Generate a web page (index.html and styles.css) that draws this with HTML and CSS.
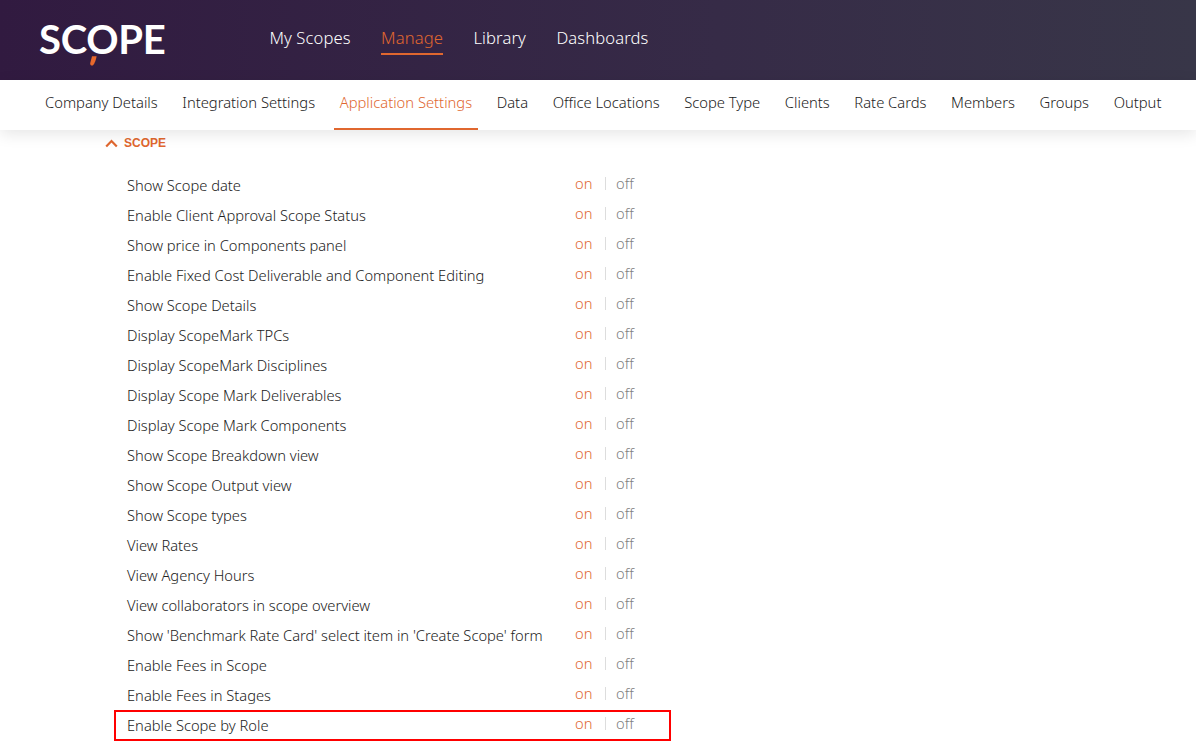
FILE: index.html
```html
<!DOCTYPE html>
<html lang="en">
<head>
    <meta charset="UTF-8">
    <title>Application Settings</title>
    <link rel="stylesheet" href="styles.css">
</head>
<body>
    <header class="top-bar">
        <a class="logo" href="#">
            <span class="logo-text">SCOPE</span>
            <svg class="logo-tail" width="10" height="12" viewBox="0 0 10 12"><path d="M7.6 1.2 3 1.2 1.2 8.2C.9 10 2.8 11.2 4.1 10.2 5.6 8.8 7 4.6 7.6 1.2Z" fill="#e8692c"/></svg>
        </a>
        <nav class="main-nav">
            <a href="#">My Scopes</a>
            <a href="#" class="active">Manage</a>
            <a href="#">Library</a>
            <a href="#">Dashboards</a>
        </nav>
    </header>
    <nav class="sub-nav">
        <a href="#">Company Details</a>
        <a href="#">Integration Settings</a>
        <a href="#" class="active">Application Settings</a>
        <a href="#">Data</a>
        <a href="#">Office Locations</a>
        <a href="#">Scope Type</a>
        <a href="#">Clients</a>
        <a href="#">Rate Cards</a>
        <a href="#">Members</a>
        <a href="#">Groups</a>
        <a href="#">Output</a>
    </nav>
    <main class="content">
        <div class="section-title">
            <svg width="14" height="10" viewBox="0 0 14 10"><path d="M1.2 8.4 6.5 3l5.3 5.4" fill="none" stroke="#e0672f" stroke-width="2.2"/></svg>
            <span>SCOPE</span>
        </div>
        <div class="settings">
            <div class="row"><span class="label">Show Scope date</span><span class="on">on</span><span class="off">off</span></div>
            <div class="row"><span class="label">Enable Client Approval Scope Status</span><span class="on">on</span><span class="off">off</span></div>
            <div class="row"><span class="label">Show price in Components panel</span><span class="on">on</span><span class="off">off</span></div>
            <div class="row"><span class="label">Enable Fixed Cost Deliverable and Component Editing</span><span class="on">on</span><span class="off">off</span></div>
            <div class="row"><span class="label">Show Scope Details</span><span class="on">on</span><span class="off">off</span></div>
            <div class="row"><span class="label">Display ScopeMark TPCs</span><span class="on">on</span><span class="off">off</span></div>
            <div class="row"><span class="label">Display ScopeMark Disciplines</span><span class="on">on</span><span class="off">off</span></div>
            <div class="row"><span class="label">Display Scope Mark Deliverables</span><span class="on">on</span><span class="off">off</span></div>
            <div class="row"><span class="label">Display Scope Mark Components</span><span class="on">on</span><span class="off">off</span></div>
            <div class="row"><span class="label">Show Scope Breakdown view</span><span class="on">on</span><span class="off">off</span></div>
            <div class="row"><span class="label">Show Scope Output view</span><span class="on">on</span><span class="off">off</span></div>
            <div class="row"><span class="label">Show Scope types</span><span class="on">on</span><span class="off">off</span></div>
            <div class="row"><span class="label">View Rates</span><span class="on">on</span><span class="off">off</span></div>
            <div class="row"><span class="label">View Agency Hours</span><span class="on">on</span><span class="off">off</span></div>
            <div class="row"><span class="label">View collaborators in scope overview</span><span class="on">on</span><span class="off">off</span></div>
            <div class="row"><span class="label">Show 'Benchmark Rate Card' select item in 'Create Scope' form</span><span class="on">on</span><span class="off">off</span></div>
            <div class="row"><span class="label">Enable Fees in Scope</span><span class="on">on</span><span class="off">off</span></div>
            <div class="row"><span class="label">Enable Fees in Stages</span><span class="on">on</span><span class="off">off</span></div>
            <div class="row highlight"><span class="label">Enable Scope by Role</span><span class="on">on</span><span class="off">off</span></div>
        </div>
    </main>
</body>
</html>
```

FILE: styles.css
```css
html, body {
    height: 751px;
    overflow: hidden;
}
body {
    margin: 0;
    background: #fff;
    font-family: "Noto Sans", "Liberation Sans", sans-serif;
    color: #222;
}
a {
    text-decoration: none;
    color: inherit;
}
.top-bar {
    height: 80px;
    display: flex;
    align-items: center;
    padding-left: 39px;
    background: linear-gradient(90deg, #311a40 0%, #362b47 60%, #383648 100%);
}
.logo {
    position: relative;
    display: block;
    width: 126px;
    margin-right: 104.5px;
    margin-top: -1px;
}
.logo-text {
    font-family: Lato, sans-serif;
    font-size: 40px;
    font-weight: 700;
    line-height: 38px;
    letter-spacing: -0.3px;
    color: #fff;
}
.logo-tail {
    position: absolute;
    left: 50px;
    top: 35px;
}
.main-nav {
    display: flex;
    gap: 30.5px;
    margin-top: -3px;
    font-size: 16.6px;
    font-weight: 300;
    letter-spacing: 0.1px;
    color: #fff;
}
.main-nav a {
    padding: 3px 0 4px;
    border-bottom: 2px solid transparent;
}
.main-nav .active {
    color: #e0672f;
    border-bottom-color: #e0672f;
}
.sub-nav {
    position: relative;
    height: 50px;
    display: flex;
    gap: 13.6px;
    padding-left: 39.5px;
    background: #fff;
    box-shadow: 0 4px 16px rgba(0, 0, 0, 0.1);
    font-size: 14.75px;
    font-weight: 300;
}
.sub-nav a {
    padding: 0 5.5px;
    line-height: 44px;
    height: 48px;
    border-bottom: 2px solid transparent;
}
.sub-nav .active {
    color: #e0672f;
    border-bottom-color: #e0672f;
}
.content {
    padding: 4px 0 0 105px;
}
.section-title {
    display: flex;
    align-items: center;
    gap: 5px;
    height: 18px;
    font-family: "Liberation Sans", sans-serif;
    font-size: 12px;
    font-weight: 700;
    color: #e0672f;
}
.settings {
    margin-top: 19px;
    width: 557px;
    margin-left: 9px;
}
.row {
    display: flex;
    align-items: center;
    height: 30px;
    padding-left: 13px;
    font-size: 14.7px;
    font-weight: 300;
    box-sizing: border-box;
}
.label {
    width: 448px;
    margin-top: -2px;
    white-space: nowrap;
}
.on {
    width: 30px;
    margin-top: -7px;
    color: #e0672f;
}
.off {
    margin-top: -5px;
    padding-left: 10px;
    border-left: 1px solid #ddd;
    line-height: 13px;
    color: #808080;
}
.highlight {
    height: 31px;
    margin-top: -1px;
    padding-top: 1px;
    outline: 2px solid #f00;
    outline-offset: -2px;
}
```
